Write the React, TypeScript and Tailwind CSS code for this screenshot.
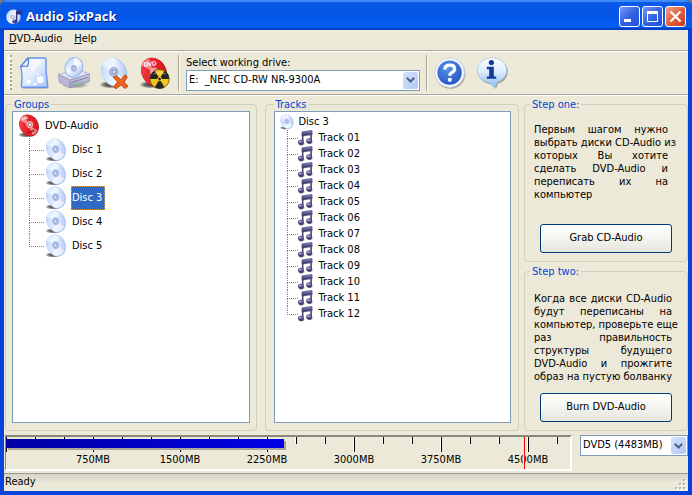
import React from "react";

const discs = ["Disc 1", "Disc 2", "Disc 3", "Disc 4", "Disc 5"];
const tracks = Array.from({ length: 12 }, (_, i) => `Track ${String(i + 1).padStart(2, "0")}`);

const stepOne = [
  "Первым шагом нужно",
  "выбрать диски CD-Audio из",
  "которых Вы хотите",
  "сделать DVD-Audio и",
  "переписать их на",
];
const stepTwo = [
  "Когда все диски CD-Audio",
  "будут переписаны на",
  "компьютер, проверьте еще",
  "раз правильность",
  "структуры будущего",
  "DVD-Audio и прожгите",
  "образ на пустую болванку",
];

/* Shared gradients for the icons */
function Gradients() {
  return (
    <svg width="0" height="0" className="absolute" aria-hidden="true">
      <defs>
        <linearGradient id="disc" x1="0" y1="0.2" x2="1" y2="0.8">
          <stop offset="0" stopColor="#bcd5fb" />
          <stop offset="0.35" stopColor="#dfebfe" />
          <stop offset="0.5" stopColor="#f6faff" />
          <stop offset="0.65" stopColor="#dce8fd" />
          <stop offset="1" stopColor="#a9c6f6" />
        </linearGradient>
        <linearGradient id="red" x1="0" y1="0" x2="1" y2="1">
          <stop offset="0" stopColor="#f0484c" />
          <stop offset="0.5" stopColor="#e6222b" />
          <stop offset="1" stopColor="#d0141e" />
        </linearGradient>
        <linearGradient id="page" x1="0" y1="0" x2="1" y2="1">
          <stop offset="0" stopColor="#ffffff" />
          <stop offset="0.5" stopColor="#dfeafd" />
          <stop offset="1" stopColor="#a4c4f8" />
        </linearGradient>
        <linearGradient id="steel" x1="0" y1="0" x2="0" y2="1">
          <stop offset="0" stopColor="#d6d7ea" />
          <stop offset="1" stopColor="#9495b8" />
        </linearGradient>
        <linearGradient id="note" x1="0" y1="0" x2="0" y2="1">
          <stop offset="0" stopColor="#8a88d6" />
          <stop offset="1" stopColor="#2d2a63" />
        </linearGradient>
        <radialGradient id="help" cx="0.4" cy="0.3" r="0.8">
          <stop offset="0" stopColor="#5d93ea" />
          <stop offset="1" stopColor="#1f50c0" />
        </radialGradient>
        <linearGradient id="balloon" x1="0" y1="0" x2="0" y2="1">
          <stop offset="0" stopColor="#ffffff" />
          <stop offset="0.5" stopColor="#d6ebfc" />
          <stop offset="1" stopColor="#88b9ea" />
        </linearGradient>
        <radialGradient id="soft">
          <stop offset="0" stopColor="#000" stopOpacity="0.75" />
          <stop offset="0.6" stopColor="#000" stopOpacity="0.5" />
          <stop offset="1" stopColor="#000" stopOpacity="0" />
        </radialGradient>
      </defs>
    </svg>
  );
}

function DiscShape({ fill = "url(#disc)", edge = "#9dbcf0" }: { fill?: string; edge?: string }) {
  return (
    <g>
      <ellipse cx="9.5" cy="20.8" rx="8.5" ry="2.8" fill="url(#soft)" />
      <g transform="rotate(-28 12 11)">
        <ellipse cx="11.9" cy="11.5" rx="9.3" ry="11.3" fill={edge} />
        <ellipse cx="11.6" cy="11.1" rx="9" ry="11" fill={fill} />
        <path d="M11.6 11 L6.2 2.2 Q9.4 0.2 13 0.5Z" fill="#fff" opacity="0.45" />
        <path d="M11.6 11 L17 19.8 Q14 21.7 10.5 21.7Z" fill="#fff" opacity="0.45" />
      </g>
    </g>
  );
}

function DiscIcon({ size = 24 }: { size?: number }) {
  return (
    <svg width={size} height={size} viewBox="0 0 24 24" aria-hidden="true">
      <DiscShape />
      <ellipse cx="11.6" cy="11.2" rx="3" ry="3.6" fill="#b3c8ee" stroke="#93abda" strokeWidth="0.8" />
      <ellipse cx="11.6" cy="11.2" rx="1.2" ry="1.5" fill="#fff" stroke="#7a8cbc" strokeWidth="0.7" />
    </svg>
  );
}

function RedDiscIcon() {
  return (
    <svg width="24" height="24" viewBox="0 0 24 24" aria-hidden="true">
      <DiscShape fill="url(#red)" edge="#b3101a" />
      <path d="M4.6 5 L10.4 3.6" stroke="#fbd5d5" strokeWidth="2.4" strokeDasharray="1.6 0.6" />
      <ellipse cx="12.8" cy="10.6" rx="3.5" ry="3.7" fill="#f3a9aa" />
      <ellipse cx="12.8" cy="10.6" rx="1.5" ry="1.7" fill="#fff" stroke="#9b5560" strokeWidth="0.8" />
      <path d="M10.5 19 L17.5 16.4" stroke="#8d101b" strokeWidth="1.2" />
    </svg>
  );
}

function NoteIcon() {
  return (
    <svg width="16" height="16" viewBox="0 0 16 16" aria-hidden="true">
      <g opacity="0.35" transform="translate(1 1)" fill="#444">
        <path d="M4 1.9 L13.7 0.4 V4.2 L4 5.6Z" />
        <ellipse cx="2.8" cy="12.4" rx="2.6" ry="2.2" />
        <ellipse cx="11" cy="11" rx="2.6" ry="2.2" />
      </g>
      <path d="M4.7 12.5 V3 M13.1 11 V2" stroke="#4a4870" strokeWidth="1.6" />
      <path d="M4 1.9 L13.9 0.4 V4.4 L4 5.8Z" fill="url(#note)" stroke="#3d3a6d" strokeWidth="0.6" />
      <ellipse cx="3" cy="12.4" rx="2.7" ry="2.4" fill="url(#note)" stroke="#35325f" strokeWidth="0.6" />
      <ellipse cx="11.2" cy="11" rx="2.7" ry="2.4" fill="url(#note)" stroke="#35325f" strokeWidth="0.6" />
      <circle cx="2.2" cy="11.6" r="0.9" fill="#b9b7ee" />
      <circle cx="10.4" cy="10.2" r="0.9" fill="#b9b7ee" />
    </svg>
  );
}

function AppIcon() {
  return (
    <svg width="16" height="16" viewBox="0 0 16 16" aria-hidden="true">
      <circle cx="7.4" cy="7.8" r="7.2" fill="url(#disc)" />
      <circle cx="6.6" cy="8" r="2.1" fill="#9aa6cf" />
      <circle cx="6.6" cy="8" r="0.9" fill="#fff" />
      <path d="M10.6 12.5 V2.2 H15.4 V4.8 H10.6" fill="#2c3285" stroke="#2c3285" strokeWidth="1.4" />
      <ellipse cx="8.8" cy="12.6" rx="2.5" ry="2.1" fill="#2c3285" />
      <circle cx="8.2" cy="12" r="0.8" fill="#a9b0ee" />
    </svg>
  );
}

function NewIcon() {
  return (
    <svg width="32" height="32" viewBox="0 0 32 32" aria-hidden="true">
      <path d="M5 31 H28.5 L30.4 30" stroke="#8a8f9d" strokeWidth="1.4" opacity="0.6" fill="none" />
      <path d="M10 1 H27 Q28 1 27.9 2 Q27.4 15 29.8 28.8 Q29.9 30.2 28.6 30.2 H4.6 Q3.3 30.2 3.4 28.8 Q5 18 2.6 9.6Z" fill="url(#page)" stroke="#6c93e8" strokeWidth="1.4" strokeLinejoin="round" />
      <path d="M10 1 Q11.4 5 9.4 9.4 Q6 8.8 2.6 9.6Z" fill="#eef4ff" stroke="#5d86de" strokeWidth="1.3" strokeLinejoin="round" />
      <path d="M14 2.5 L26 2.5 L12 18Z" fill="#fff" opacity="0.5" />
      <circle cx="10.8" cy="24.6" r="2.1" fill="#fff" />
      <circle cx="22.3" cy="22.8" r="3.5" fill="#fff" opacity="0.95" />
      <circle cx="16.8" cy="27.2" r="1.4" fill="#fff" />
      <circle cx="19.6" cy="16.6" r="1.1" fill="#fff" />
    </svg>
  );
}

function DriveIcon() {
  return (
    <svg width="32" height="32" viewBox="0 0 32 32" aria-hidden="true">
      <ellipse cx="17" cy="28" rx="14" ry="3.5" fill="url(#soft)" opacity="0.5" />
      <path d="M0.6 17.4 L19 12.6 L31.4 17 L12 23Z" fill="#e3e4f2" stroke="#a9aac8" strokeWidth="0.8" strokeLinejoin="round" />
      <path d="M0.6 17.4 L12 23 V31 L1.2 25Z" fill="#b7b8d4" stroke="#9798ba" strokeWidth="0.8" />
      <path d="M12 23 L31.4 17 V24.6 L12 31Z" fill="url(#steel)" stroke="#9091b4" strokeWidth="0.8" />
      <path d="M13.6 25.4 L30 20.2" stroke="#74769c" strokeWidth="0.9" />
      <path d="M20 27.2 L22.4 26.4" stroke="#6adf5b" strokeWidth="1.6" />
      <g transform="rotate(24 16 10)">
        <ellipse cx="16" cy="10.4" rx="8.6" ry="10" fill="url(#disc)" stroke="#8ab0ee" strokeWidth="0.9" />
        <path d="M16 10 L12 1.4 Q15 0 18.5 1Z" fill="#fff" opacity="0.7" />
      </g>
      <ellipse cx="15.8" cy="11.4" rx="2.9" ry="3.3" fill="#a8b9dd" />
      <ellipse cx="15.8" cy="11.4" rx="1.2" ry="1.4" fill="#fff" stroke="#7381ae" strokeWidth="0.6" />
    </svg>
  );
}

function EraseIcon() {
  return (
    <svg width="32" height="32" viewBox="0 0 32 32" aria-hidden="true">
      <g transform="scale(1.33)">
        <DiscShape />
      </g>
      <ellipse cx="15.8" cy="15" rx="4.1" ry="4.7" fill="#b0bfe2" stroke="#8d9fcb" />
      <ellipse cx="15.8" cy="15" rx="1.7" ry="2" fill="#fff" stroke="#7381ae" />
      <path d="M15.4 20.6 Q17.5 18.6 19.3 19.4 L23 22.8 L26.8 18 Q28.8 18.4 29.2 20.4 L25.8 25 L29.8 29 Q29 31 27 31.4 L22.8 27.8 L18.6 31.6 Q16.2 31.4 15.8 29.4 L19.8 25Z" fill="#f2641c" stroke="#b83c08" strokeWidth="0.9" />
    </svg>
  );
}

function BurnIcon() {
  return (
    <svg width="32" height="32" viewBox="0 0 32 32" aria-hidden="true">
      <g transform="scale(1.33)">
        <DiscShape fill="url(#red)" edge="#b3101a" />
      </g>
      <text x="6" y="9.5" fontSize="6" fontWeight="700" fill="#fff" transform="rotate(-6 8 9)" fontFamily="Liberation Sans, sans-serif">DVD</text>
      <circle cx="16" cy="14.4" r="4" fill="#f9b7b4" opacity="0.8" />
      <circle cx="21.6" cy="22" r="9.6" fill="#f7c417" stroke="#58521f" strokeWidth="0.8" />
      <path d="M21.6 22 L16.8 13.7 A9.6 9.6 0 0 0 12 22Z M21.6 22 L31.2 22 A9.6 9.6 0 0 0 26.4 13.7Z M21.6 22 L16.8 30.3 A9.6 9.6 0 0 0 26.4 30.3Z" fill="#26251f" />
      <path d="M14.4 18 A9 9 0 0 1 28.8 18 Q21.6 15.5 14.4 18Z" fill="#fff" opacity="0.3" />
      <circle cx="21.6" cy="22" r="1.8" fill="#26251f" stroke="#f7d14a" strokeWidth="0.9" />
    </svg>
  );
}

function HelpIcon() {
  return (
    <svg width="32" height="32" viewBox="0 0 32 32" aria-hidden="true">
      <circle cx="16.4" cy="16.8" r="15" fill="#777" opacity="0.55" />
      <circle cx="15.6" cy="15.6" r="14.8" fill="#f3f6fc" stroke="#c4ccdc" strokeWidth="0.7" />
      <circle cx="15.6" cy="15.6" r="12.2" fill="url(#help)" />
      <path d="M10.8 12.6 Q11 8.2 15.8 8.2 Q20.6 8.2 20.6 12 Q20.6 14.2 18 15.4 Q15.8 16.5 15.8 18.8" fill="none" stroke="#fff" strokeWidth="3.2" />
      <circle cx="15.8" cy="22.8" r="2.1" fill="#fff" />
    </svg>
  );
}

function InfoIcon() {
  return (
    <svg width="32" height="32" viewBox="0 0 32 32" aria-hidden="true">
      <path d="M17 2 A14 12.6 0 0 1 22 26.6 L19.8 31.8 L15 27.2 A14 12.6 0 0 1 17 2Z" fill="#666" opacity="0.6" />
      <path d="M15.4 0.8 A14.6 12.6 0 0 1 20.5 25.4 L19 31 L13.2 25.8 A14.6 12.6 0 0 1 15.4 0.8Z" fill="url(#balloon)" stroke="#a9c3de" strokeWidth="0.8" />
      <circle cx="15.4" cy="5.6" r="2.6" fill="#123a9e" />
      <path d="M10.8 9.8 H17.8 V19.4 H20.2 V21.8 H10.8 V19.4 H13.2 V12.2 H10.8Z" fill="#123a9e" />
    </svg>
  );
}

function ToolButton({ label, children }: { label: string; children: React.ReactNode }) {
  return (
    <button type="button" aria-label={label} className="h-8 w-8 shrink-0">
      {children}
    </button>
  );
}

function Divider() {
  return <div className="h-9 w-[2px] shrink-0 border-l border-[#aca899] bg-[#f8f7f0]" />;
}

function Combo({ id, label, value, className }: { id: string; label?: string; value: string; className: string }) {
  return (
    <div className={`relative ${className}`}>
      <select id={id} aria-label={label} className="block h-[21px] w-full appearance-none border border-[#7f9db9] bg-white pl-[2px] pr-5 text-black">
        <option>{value}</option>
      </select>
      <span className="pointer-events-none absolute inset-y-[2px] right-[2px] flex w-[15px] items-center justify-center rounded-[2px] bg-linear-to-br from-[#d5e1fc] to-[#b3c8f5]">
        <svg width="9" height="6" viewBox="0 0 9 6" aria-hidden="true">
          <path d="M0.8 0.8 L4.5 4.5 L8.2 0.8" fill="none" stroke="#4d6185" strokeWidth="2" />
        </svg>
      </span>
    </div>
  );
}

function Panel({ title, className, children }: { title: string; className: string; children: React.ReactNode }) {
  return (
    <fieldset className={`min-w-0 rounded-[4px] border border-[#d0d0bf] ${className}`}>
      <legend className="px-[2px] leading-[13px] text-[#0046d5]">{title}</legend>
      {children}
    </fieldset>
  );
}

/* Dotted connector from the parent's line to a child row */
function Elbow({ last, className }: { last: boolean; className: string }) {
  return (
    <span className={`flex shrink-0 flex-col self-stretch ${className}`}>
      <span className="flex-1 border-b border-l border-dotted border-[#808080]" />
      <span className={last ? "flex-1" : "flex-1 border-l border-dotted border-[#808080]"} />
    </span>
  );
}

function Prose({ lines, last }: { lines: string[]; last?: string }) {
  return (
    <p className="leading-[13px]">
      {lines.map((line) => (
        <span key={line} className="block whitespace-nowrap text-justify [text-align-last:justify]">
          {line}{" "}
        </span>
      ))}
      {last && <span className="block">{last}</span>}
    </p>
  );
}

function PushButton({ children }: { children: React.ReactNode }) {
  return (
    <button type="button" className="h-[29px] w-[132px] shrink-0 rounded-[3px] border border-[#003c74] bg-linear-to-b from-white via-[#f4f4f0] to-[#e6e5dc]">
      {children}
    </button>
  );
}

function Ruler() {
  const ticks = Array.from({ length: 20 }, (_, i) => i);
  return (
    <div className="h-9 min-w-0 flex-1 border-2 border-l border-b-white border-l-[#8a887a] border-r-white border-t-[#8a887a]">
      <svg width="100%" height="32" className="block" role="img" aria-label="Used space" shapeRendering="crispEdges">
        <defs>
          <linearGradient id="used">
            <stop offset="0" stopColor="#0000a4" />
            <stop offset="1" stopColor="#0000e4" />
          </linearGradient>
        </defs>
        {ticks.map((i) => (
          <g key={i}>
            <rect x={i * 29 - 1} y="0" width="1" height={i % 3 ? 7 : 15} fill="#fff" />
            <rect x={i * 29} y="0" width="1" height={i % 3 ? 7 : 15} fill="#000" />
          </g>
        ))}
        <rect x="2" y="4" width="278" height="9" fill="#aca899" />
        <rect x="0" y="2" width="278" height="9" fill="url(#used)" />
        {[1, 2, 3, 4, 5, 6].map((n) => (
          <text key={n} x={n * 87} y="26" textAnchor="middle" fontSize="11">{`${n * 750}MB`}</text>
        ))}
        <rect x="517" y="0" width="1" height="32" fill="#ffff00" />
        <rect x="518" y="0" width="1" height="32" fill="#ff0000" />
      </svg>
    </div>
  );
}

const capButton = "flex h-[21px] w-[21px] items-center justify-center rounded-[3px] border border-white";

export default function App() {
  return (
    <div className="bg-[#7c7a72] font-['DejaVu_Sans_Condensed','DejaVu_Sans',sans-serif] text-[11px] text-black">
      <Gradients />
      <div className="flex min-h-screen flex-col overflow-hidden rounded-t-[7px] bg-[#0831d9]">
        <header className="flex h-[30px] shrink-0 items-center bg-linear-to-b from-[#0a5be8] via-[#0455e6] to-[#0560fa] px-[6px] pt-[3px] shadow-[inset_0_2px_1px_#3f8cf5,inset_0_-2px_1px_#0340c4]">
          <AppIcon />
          <h1 className="ml-1 flex-1 font-['Open_Sans','Noto_Sans',sans-serif] text-[13px] font-bold text-white [text-shadow:1px_1px_#0a1883]">Audio SixPack</h1>
          <div className="flex gap-[2px]">
            <button type="button" aria-label="Minimize" className={`${capButton} bg-linear-to-br from-[#7597f0] via-[#3463e4] to-[#1f50d8]`}>
              <svg width="15" height="15" aria-hidden="true"><rect x="2" y="10" width="7" height="3" fill="#fff" /></svg>
            </button>
            <button type="button" aria-label="Maximize" className={`${capButton} bg-linear-to-br from-[#7597f0] via-[#3463e4] to-[#1f50d8]`}>
              <svg width="15" height="15" aria-hidden="true"><path d="M2.5 2 V12.5 H12.5 V2" fill="none" stroke="#fff" /><rect x="2" y="2" width="11" height="3" fill="#fff" /></svg>
            </button>
            <button type="button" aria-label="Close" className={`${capButton} bg-linear-to-br from-[#f0a088] via-[#e2603c] to-[#c83c14]`}>
              <svg width="15" height="15" aria-hidden="true"><path d="M2.5 2.5 L12.5 12.5 M12.5 2.5 L2.5 12.5" stroke="#fff" strokeWidth="2.2" /></svg>
            </button>
          </div>
        </header>

        <div className="flex flex-1 flex-col border-x-4 border-b-4 border-[#0543dc] bg-[#ece9d8]">
          <nav className="flex h-5 shrink-0 items-center gap-3 px-[5px] pb-[2px]">
            <button type="button"><span className="underline">D</span>VD-Audio</button>
            <button type="button"><span className="underline">H</span>elp</button>
          </nav>

          <div className="flex h-[45px] shrink-0 items-center border-y border-[#aca899] pl-[3px] shadow-[inset_0_1px_#fff,0_1px_#fff]">
            <div className="mr-[6px] h-[35px] w-[5px] shrink-0 border-r-2 border-dotted border-[#a6a294] bg-[#f6f5ee]" />
            <div className="flex gap-2">
              <ToolButton label="New"><NewIcon /></ToolButton>
              <ToolButton label="Drive"><DriveIcon /></ToolButton>
              <ToolButton label="Erase disc"><EraseIcon /></ToolButton>
              <ToolButton label="Burn disc"><BurnIcon /></ToolButton>
            </div>
            <div className="ml-2 flex items-center gap-[6px]">
              <Divider />
              <div className="w-[234px]">
                <label htmlFor="drive" className="block leading-[15px]">Select working drive:</label>
                <Combo id="drive" value="E:&nbsp; _NEC CD-RW NR-9300A" className="w-full" />
              </div>
              <Divider />
            </div>
            <div className="ml-[6px] flex gap-[10px]">
              <ToolButton label="Help"><HelpIcon /></ToolButton>
              <ToolButton label="About"><InfoIcon /></ToolButton>
            </div>
          </div>

          <main className="flex flex-1 pb-1 pl-px pt-[3px]">
            <Panel title="Groups" className="mr-2 flex flex-1 flex-col px-[6px] pb-[7px]">
              <ul className="flex-1 border border-[#7f9db9] bg-white px-1 pt-[2px]">
                <li>
                  <div className="flex h-6 items-center gap-1"><RedDiscIcon /><span>DVD-Audio</span></div>
                  <ul className="pl-3">
                    {discs.map((name) => (
                      <li key={name} className="flex h-6 items-center">
                        <Elbow last={name === "Disc 5"} className="w-[15px]" />
                        <DiscIcon />
                        <span className={name === "Disc 3" ? "ml-[3px] flex h-6 items-center border border-dotted border-[#e0a040] bg-[#316ac5] pr-[2px] text-white" : "ml-[3px] flex h-6 items-center pl-px"}>{name}</span>
                      </li>
                    ))}
                  </ul>
                </li>
              </ul>
            </Panel>

            <Panel title="Tracks" className="mr-[5px] flex flex-1 flex-col pb-[7px] pl-2 pr-[7px]">
              <ul className="flex-1 border border-[#7f9db9] bg-white px-[4px] pt-[2px]">
                <li>
                  <div className="flex h-4 items-center gap-1"><DiscIcon size={16} /><span>Disc 3</span></div>
                  <ul className="pl-2">
                    {tracks.map((name) => (
                      <li key={name} className="flex h-4 items-center">
                        <Elbow last={name === "Track 12"} className="w-[11px]" />
                        <NoteIcon />
                        <span className="ml-[5px]">{name}</span>
                      </li>
                    ))}
                  </ul>
                </li>
              </ul>
            </Panel>

            <div className="flex w-[164px] shrink-0 flex-col gap-[3px]">
              <Panel title="Step one:" className="px-[5px] pb-2">
                <div className="px-1 pt-3 pr-[14px]"><Prose lines={stepOne} last="компьютер" /></div>
                <div className="mt-[23px] flex pl-[10px]"><PushButton>Grab CD-Audio</PushButton></div>
              </Panel>
              <Panel title="Step two:" className="flex-1 px-[5px] pb-2">
                <div className="px-1 pt-[14px] pr-[10px]"><Prose lines={stepTwo} /></div>
                <div className="mt-[10px] flex pl-[10px]"><PushButton>Burn DVD-Audio</PushButton></div>
              </Panel>
            </div>
          </main>

          <div className="flex shrink-0 items-start gap-2 pb-[2px] pl-px">
            <Ruler />
            <Combo id="media" label="Disc type" value="DVD5 (4483MB)" className="w-[108px]" />
          </div>

          <footer className="flex h-[18px] shrink-0 items-center justify-between border-t border-[#9d9b8f] bg-linear-to-b from-[#d6d3c2] via-[#ece9d8] to-[#ece9d8] px-px">
            <span>Ready</span>
            <svg width="12" height="12" aria-hidden="true" className="self-end">
              {[[8, 0], [4, 4], [8, 4], [0, 8], [4, 8], [8, 8]].map(([x, y]) => (
                <g key={`${x}-${y}`}>
                  <rect x={x + 1} y={y + 1} width="2" height="2" fill="#fff" />
                  <rect x={x} y={y} width="2" height="2" fill="#b8b4a3" />
                </g>
              ))}
            </svg>
          </footer>
        </div>
      </div>
    </div>
  );
}
